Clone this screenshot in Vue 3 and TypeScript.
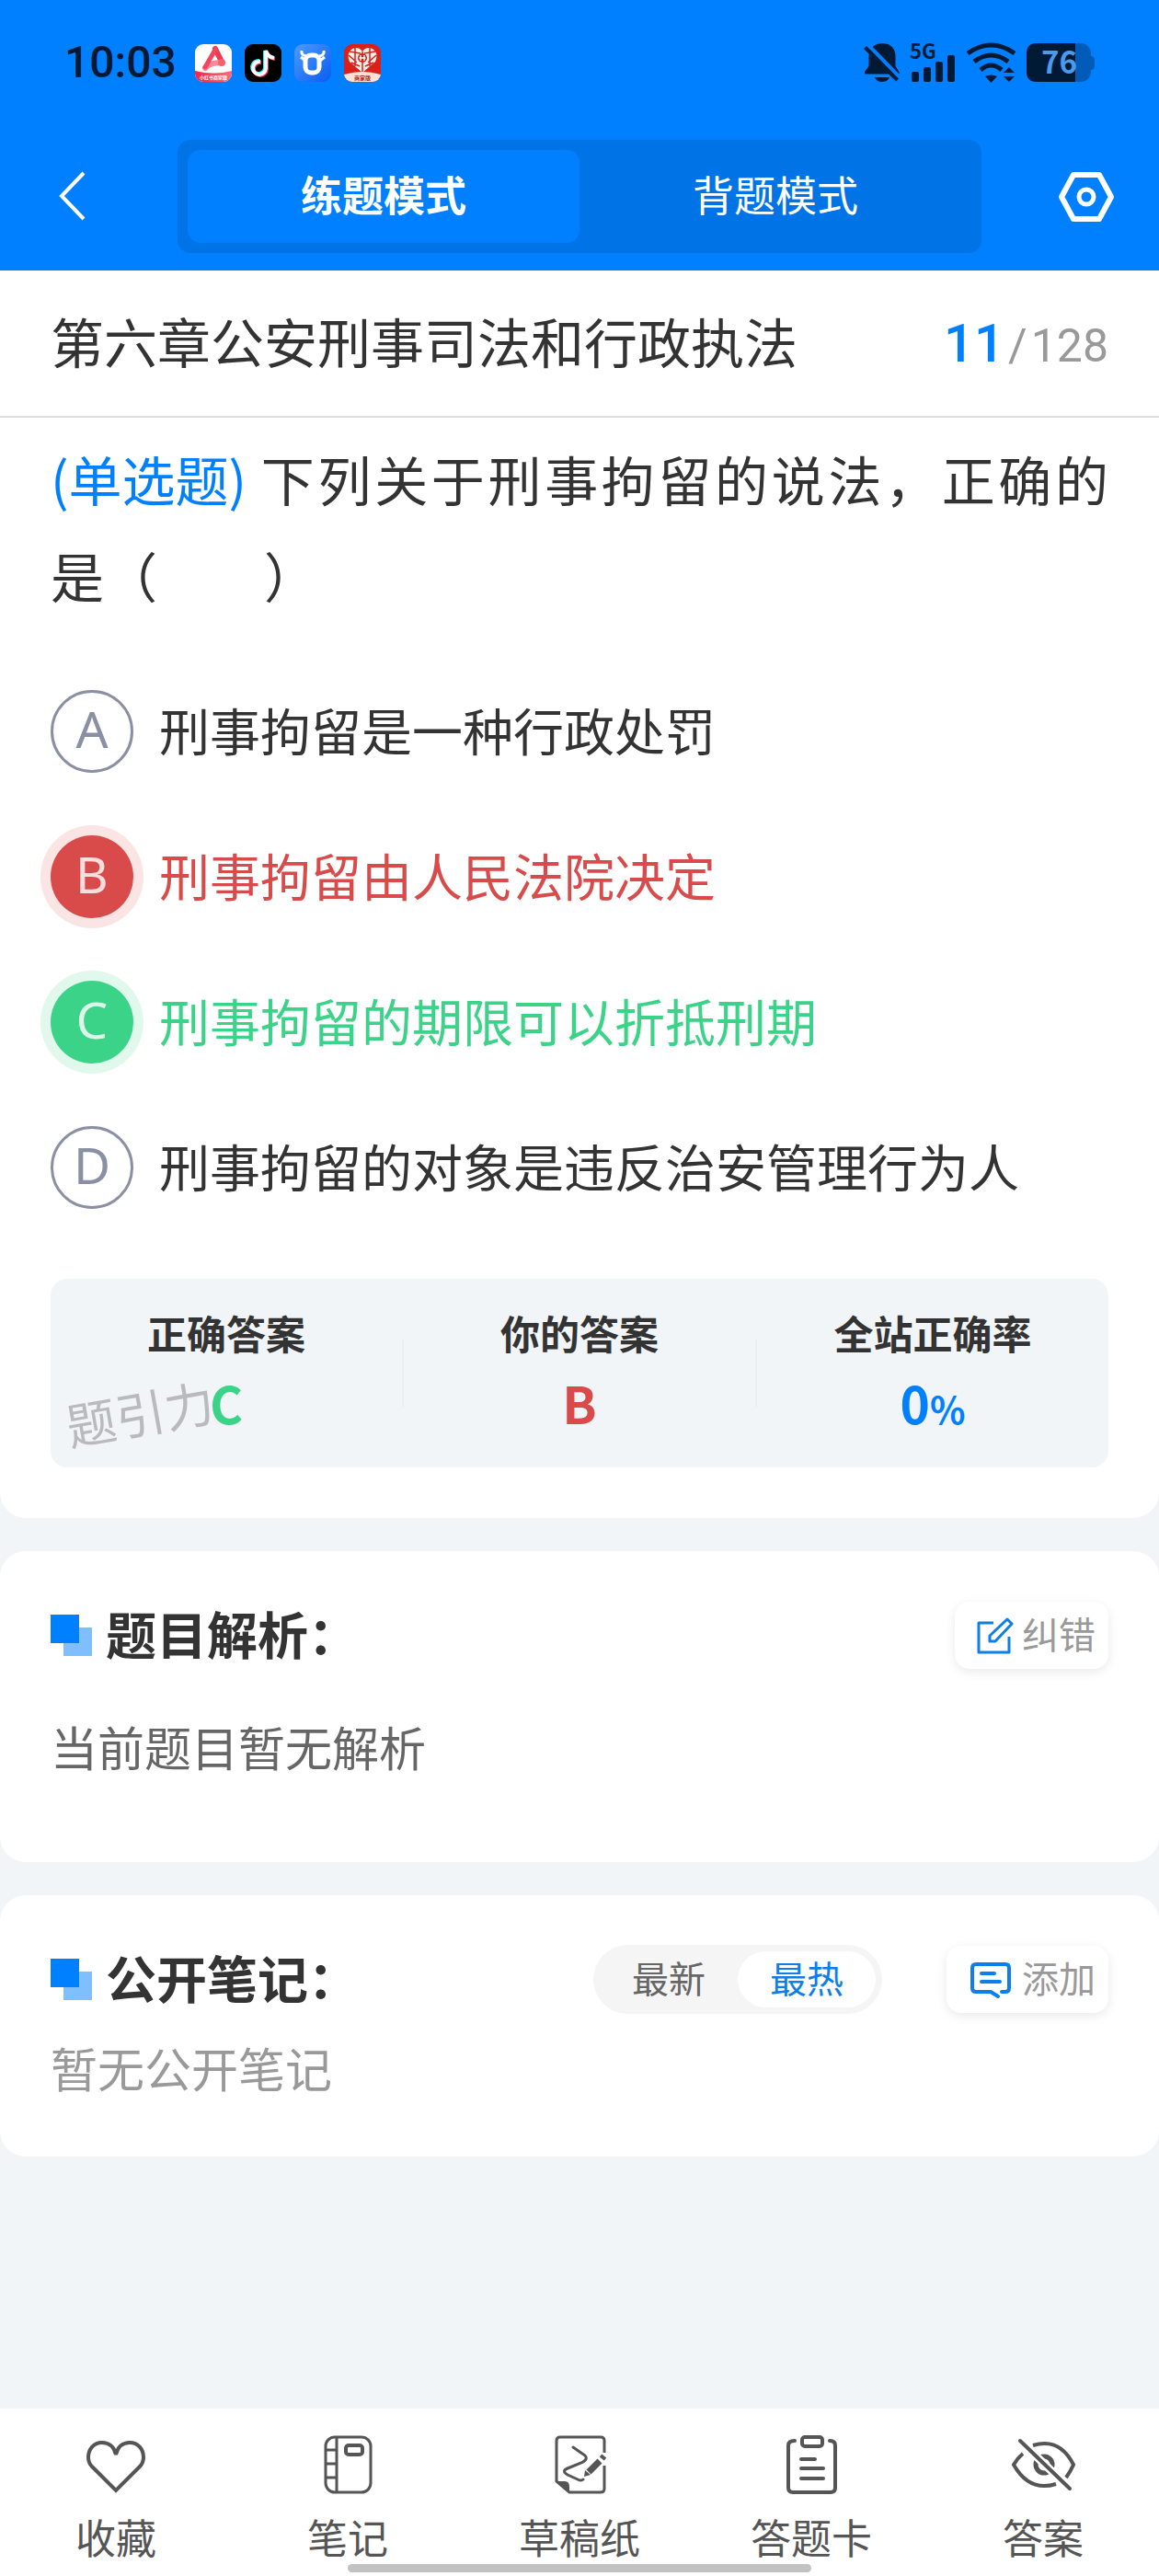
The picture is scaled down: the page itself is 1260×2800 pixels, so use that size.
<script setup lang="ts">
import { ref } from 'vue'

type OptionState = 'plain' | 'wrong' | 'right'

interface Option {
  key: string
  text: string
  state: OptionState
}

const modes = ['练题模式', '背题模式']
const mode = ref(0)

const options: Option[] = [
  { key: 'A', text: '刑事拘留是一种行政处罚', state: 'plain' },
  { key: 'B', text: '刑事拘留由人民法院决定', state: 'wrong' },
  { key: 'C', text: '刑事拘留的期限可以折抵刑期', state: 'right' },
  { key: 'D', text: '刑事拘留的对象是违反治安管理行为人', state: 'plain' },
]
const picked = ref('B')

const sorts = ['最新', '最热']
const sort = ref(1)
</script>

<template>
  <div class="page" lang="zh-CN">
    <header class="top">
      <div class="status">
        <div class="status-left">
          <span class="clock">10:03</span>
          <svg class="app" viewBox="0 0 40 41">
            <defs>
              <clipPath id="app-a"><rect width="40" height="41" rx="9" /></clipPath>
              <linearGradient id="band" x1="0" x2="1"><stop offset="0" stop-color="#f0244a" /><stop offset="1" stop-color="#ff6a7c" /></linearGradient>
            </defs>
            <g clip-path="url(#app-a)">
              <rect width="40" height="41" fill="#fff" />
              <path d="M0 29Q20 34 40 29V41H0Z" fill="url(#band)" />
              <path d="M22 5L28 17" fill="none" stroke="#f03a54" stroke-width="6" stroke-linecap="round" />
              <path d="M11 26Q16 20 29 20" fill="none" stroke="#ff8a96" stroke-width="6" stroke-linecap="round" />
              <path d="M11 25L22 6" stroke="#f4455d" stroke-width="5" stroke-linecap="round" />
              <circle cx="29" cy="20" r="4" fill="#f8606f" />
              <text x="20" y="38" font-size="5" font-weight="700" text-anchor="middle" fill="#fff">小红书商家版</text>
            </g>
          </svg>
          <svg class="app" viewBox="0 0 40 41">
            <rect width="40" height="41" rx="9" fill="#000" />
            <g fill="none" stroke-width="4">
              <path d="M16 18A7 7 0 1 0 22 26V7Q24 14 31 15" stroke="#25f4ee" />
              <path d="M18 20A7 7 0 1 0 24 27V8Q26 15 33 16" stroke="#fe2c55" />
              <path d="M17 19A7 7 0 1 0 23 26V7Q25 14 32 15" stroke="#fff" />
            </g>
          </svg>
          <svg class="app" viewBox="0 0 40 41">
            <defs><linearGradient id="bull" x2="1" y2="1"><stop stop-color="#4d9bff" /><stop offset="1" stop-color="#0a5cf0" /></linearGradient></defs>
            <rect width="40" height="41" rx="9" fill="url(#bull)" />
            <path d="M8 7Q7 12 13 13M32 7Q33 12 27 13M7 14L12 18M33 14L28 18" fill="none" stroke="#fff" stroke-width="3" />
            <rect x="12" y="12" width="15" height="19" rx="6" fill="none" stroke="#fff" stroke-width="5" />
          </svg>
          <svg class="app" viewBox="0 0 40 41">
            <defs><clipPath id="app-d"><rect width="40" height="41" rx="9" /></clipPath></defs>
            <g clip-path="url(#app-d)">
              <rect width="40" height="41" fill="#d9201a" />
              <path d="M0 33Q20 27 40 33V41H0Z" fill="#ffe3d6" />
              <path d="M20 31L6 19Q2 10 9 5Q16 2 20 8Q24 2 31 5Q38 10 34 19Z" fill="#fff0e8" />
              <path d="M12 3V24M28 3V24M5 12L14 20M35 12L26 20M6 8L18 10M34 8L22 10M20 8V30M8 20L17 24M32 20L23 24" stroke="#d9201a" stroke-width="1.500" />
              <circle cx="20" cy="15" r="5" fill="#d9201a" />
              <path d="M16.500 15H23.500M18 12V18M22 12V18" stroke="#fff" stroke-width="1.500" />
              <text x="20" y="39" font-size="6" font-weight="700" text-anchor="middle" fill="#a8281c">商家版</text>
            </g>
          </svg>
        </div>
        <div class="status-right">
          <svg width="40" height="43" viewBox="0 0 40 43">
            <path d="M1 33V31L5.500 25V14Q7 0 21 0Q34 1 34.500 14V25L38.500 31V33.500H1Z" fill="#001a36" />
            <path d="M12 37H28Q26 42 20 42Q14 42 12 37Z" fill="#001a36" />
            <path d="M3 0L41 39" stroke="#0080ff" stroke-width="4" />
            <path d="M1.500 4.500L36.500 40" stroke="#001a36" stroke-width="4" />
          </svg>
          <svg width="52" height="43" viewBox="0 0 52 43" fill="#001a36">
            <text x="0" y="17" font-size="22" font-weight="700">5G</text>
            <rect x="2" y="31" width="8" height="11" rx="2" />
            <rect x="15" y="26" width="8" height="16" rx="2" />
            <rect x="28" y="20" width="8" height="22" rx="2" />
            <rect x="41" y="13" width="8" height="29" rx="2" />
          </svg>
          <svg width="54" height="43" viewBox="0 0 54 43" fill="none" stroke="#001a36" stroke-width="5">
            <path d="M1 11Q26.500-7 52 11M8 20Q26.500 6 45 20M15 29Q26.500 19 38 29" />
            <path d="M20 36Q26.500 33 33 36L26.500 43ZM46 26L52 32H40ZM46 42L40 36H52Z" fill="#001a36" stroke="none" />
          </svg>
          <svg width="76" height="43" viewBox="0 0 76 43">
            <rect x="1" width="70" height="42" rx="11" fill="#005cb8" />
            <path d="M12 0H54V42H12Q1 42 1 31V11Q1 0 12 0Z" fill="#001a36" />
            <path d="M71 14Q75 14 75 18V25Q75 29 71 29Z" fill="#005cb8" />
            <text x="17" y="33" font-size="33" font-weight="700" fill="#4a9bee">76</text>
          </svg>
        </div>
      </div>
      <nav class="nav">
        <button class="back" type="button" aria-label="返回">
          <svg width="30" height="54" viewBox="0 0 30 54" fill="none" stroke="#fff" stroke-width="4"><path d="M28 1L4 26L28 51" /></svg>
        </button>
        <div class="modes">
          <button v-for="(m, i) in modes" :key="m" type="button" :class="['mode', { on: mode === i }]" @click="mode = i">{{ m }}</button>
        </div>
        <button class="gear" type="button" aria-label="设置">
          <svg width="62" height="54" viewBox="0 0 62 54" fill="none" stroke="#fff" stroke-width="6" stroke-linejoin="round">
            <path d="M17 3H45L58 27L45 51H17L4 27Z" /><circle cx="31" cy="27" r="8" stroke-width="5" />
          </svg>
        </button>
      </nav>
    </header>

    <main>
      <section class="card first">
        <div class="chapter">
          <h1>第六章公安刑事司法和行政执法</h1>
          <p class="count"><b>11</b><i>/</i>128</p>
        </div>
        <div class="body">
          <p class="question"><span class="kind">(单选题)</span>下列关于刑事拘留的说法，正确的是（　　）</p>
          <div class="options">
            <label v-for="o in options" :key="o.key" :class="['option', o.state]">
              <span class="mark">
                <input v-model="picked" type="radio" name="answer" :value="o.key" />
                <span class="letter">{{ o.key }}</span>
              </span>
              <span class="text">{{ o.text }}</span>
            </label>
          </div>
          <div class="result">
            <div class="cell">
              <h3>正确答案</h3>
              <p class="right">C</p>
              <span class="watermark">题引力</span>
            </div>
            <div class="rule"></div>
            <div class="cell">
              <h3>你的答案</h3>
              <p class="wrong">B</p>
            </div>
            <div class="rule"></div>
            <div class="cell">
              <h3>全站正确率</h3>
              <p class="rate">0<small>%</small></p>
            </div>
          </div>
        </div>
      </section>

      <section class="card analysis">
        <div class="head">
          <svg class="flag" width="46" height="46" viewBox="0 0 46 46"><rect x="14" y="14" width="31" height="31" fill="#80bfff" /><rect width="31" height="31" fill="#0080ff" /></svg>
          <h2>题目解析：</h2>
          <button class="act" type="button">
            <svg width="40" height="40" viewBox="0 0 40 40" fill="none" stroke="#0f7fe8" stroke-width="3" stroke-linejoin="round">
              <path d="M18 6H2V38H35V21" /><path d="M33 2L38 7L20 26H14V20Z" />
            </svg>
            <span>纠错</span>
          </button>
        </div>
        <p class="note dark">当前题目暂无解析</p>
      </section>

      <section class="card notes">
        <div class="head">
          <svg class="flag" width="46" height="46" viewBox="0 0 46 46"><rect x="14" y="14" width="31" height="31" fill="#80bfff" /><rect width="31" height="31" fill="#0080ff" /></svg>
          <h2>公开笔记：</h2>
          <div class="sorts">
            <button v-for="(s, i) in sorts" :key="s" type="button" :class="{ on: sort === i }" @click="sort = i">{{ s }}</button>
          </div>
          <button class="act" type="button">
            <svg width="49" height="40" viewBox="-2 0 49 40" fill="none" stroke="#0f7fe8" stroke-width="4" stroke-linecap="round" stroke-linejoin="round">
              <path d="M30 38L22 33H6Q2 33 2 29V7Q2 3 6 3H38Q42 3 42 7V29Q42 33 38 33H34M12 13H26M12 22H32" />
            </svg>
            <span>添加</span>
          </button>
        </div>
        <p class="note">暂无公开笔记</p>
      </section>
    </main>

    <footer class="tabs">
      <button type="button">
        <svg viewBox="0 0 72 64">
          <path d="M36 21C34 12 28 8 21 8C12 8 6 15 6 24C6 28 7 31 10 34L36 60L62 34C65 31 66 28 66 24C66 15 60 8 51 8C44 8 38 12 36 21Z" stroke-width="4" />
        </svg>
        收藏
      </button>
      <button type="button">
        <svg viewBox="0 0 72 64" stroke-width="3">
          <rect x="12" y="2" width="49" height="60" rx="10" /><path d="M24 2V62M12 16H24M12 31H24M12 46H24" /><rect x="34" y="11" width="18" height="10" rx="3" stroke-width="4" />
        </svg>
        笔记
      </button>
      <button type="button">
        <svg viewBox="0 0 72 64" stroke-width="3">
          <path d="M63 19V6Q63 2 59 2H15Q11 2 11 6V50L25 62H59Q63 62 63 58V33" />
          <path d="M10 50H20Q25 50 25 56V63Z" fill="#555" stroke="none" />
          <path d="M29 13L39 20Q48 25 38 30L23 36Q16 39 23 43L34 48Q38 50 40 48" stroke-linecap="round" />
          <path d="M58 28L46 40" stroke-width="7" /><path d="M59 22L64 26" stroke-width="4" /><path d="M42 38L48 43L41 45Z" fill="#555" stroke="none" />
        </svg>
        草稿纸
      </button>
      <button type="button">
        <svg viewBox="0 0 72 64" stroke-width="4" stroke-linecap="round">
          <path d="M18 6Q11 6 11 11V57Q11 62 16 62H57Q62 62 62 57V11Q62 6 56 6M25 26H40M25 36H49M25 47H49" /><rect x="26" y="2" width="22" height="10" rx="3" />
        </svg>
        答题卡
      </button>
      <button type="button">
        <svg viewBox="0 0 72 64" stroke-width="4">
          <path d="M25 11Q54 2 69 32Q66 39 61 46M14 20Q8 25 4 32Q21 62 50 53" />
          <circle cx="37" cy="32" r="9" stroke-width="5" /><path d="M11 6L65 58" stroke="#fff" stroke-width="9" /><path d="M11 6L65 58" stroke-linecap="round" />
        </svg>
        答案
      </button>
      <span class="home"></span>
    </footer>
  </div>
</template>

<style>
body {
  background: #f1f5f8;
}
</style>

<style scoped>
* {
  box-sizing: border-box;
}
h1, h2, h3, p {
  margin: 0;
  font-weight: 400;
}
button {
  border: 0;
  padding: 0;
  background: none;
  color: inherit;
  font: inherit;
}
svg {
  display: block;
  flex: none;
  overflow: visible;
}
.page {
  display: flex;
  flex-direction: column;
  min-height: 100vh;
  background: #f1f5f8;
  color: #333;
  font-family: "Noto Sans CJK SC", sans-serif;
}
.top {
  background: #0080ff;
  color: #fff;
}
.status {
  display: flex;
  justify-content: space-between;
  align-items: center;
  height: 136px;
  padding: 0 69px 0 70px;
}
.status-left {
  display: flex;
  align-items: center;
  gap: 14px;
}
.clock {
  width: 128px;
  color: #001a36;
  font-family: Roboto, sans-serif;
  font-size: 48px;
  font-weight: 500;
  line-height: 60px;
}
.app {
  width: 40px;
  height: 41px;
}
.status-right {
  display: flex;
  gap: 10px;
}
.nav {
  display: grid;
  grid-template-columns: 193px 1fr 193px;
  align-items: center;
  padding: 16px 0 19px;
}
.back {
  justify-self: start;
  margin-left: 63px;
}
.gear {
  justify-self: end;
  margin-right: 48px;
}
.modes {
  display: flex;
  height: 123px;
  padding: 11px;
  border-radius: 14px;
  background: #0073e6;
}
.mode {
  flex: 1;
  padding-bottom: 6px;
  border-radius: 14px;
  font-size: 45px;
}
.mode.on {
  background: #0080ff;
  font-weight: 700;
}
.card {
  margin-bottom: 36px;
  border-radius: 28px;
  background: #fff;
}
.card.first {
  border-radius: 0 0 28px 28px;
}
.chapter {
  display: flex;
  justify-content: space-between;
  align-items: center;
  height: 160px;
  padding: 0 55px;
  border-bottom: 2px solid #ddd;
}
.chapter h1 {
  padding-bottom: 6px;
  font-size: 58px;
}
.count {
  display: flex;
  align-items: baseline;
  color: #999;
  font-family: Roboto, sans-serif;
  font-size: 50px;
}
.count b {
  color: #0080ff;
  font-size: 58px;
  font-weight: 500;
}
.count i {
  margin: 0 4px;
  font-style: normal;
}
.body {
  padding: 14px 55px 55px;
}
.question {
  margin-bottom: 38px;
  font-size: 58px;
  line-height: 105px;
  text-align: justify;
}
.kind {
  display: inline-block;
  margin-right: 12px;
  color: #0080ff;
}
.option {
  display: flex;
  align-items: center;
  gap: 28px;
  height: 158px;
  font-size: 55px;
}
.text,
.letter {
  padding-bottom: 7px;
}
.mark {
  display: grid;
  place-items: center;
  width: 90px;
  height: 90px;
  color: #8a8fa3;
}
.mark > * {
  grid-area: 1 / 1;
}
.mark input {
  appearance: none;
  width: 90px;
  height: 90px;
  margin: 0;
  border: 3px solid #8a8fa3;
  border-radius: 50%;
}
.letter {
  font-family: "Noto Sans", sans-serif;
}
.wrong {
  color: #d94a4a;
}
.right {
  color: #3ad388;
}
.option.wrong .mark,
.option.right .mark {
  color: rgba(255, 255, 255, 0.82);
}
.option.wrong input {
  border: 0;
  background: #d94a4a;
  box-shadow: 0 0 0 11px #fae4e4;
}
.option.right input {
  border: 0;
  background: #3ad388;
  box-shadow: 0 0 0 11px #e1f8ec;
}
.result {
  display: flex;
  align-items: center;
  margin-top: 42px;
  border-radius: 18px;
  background: #f1f5f8;
  text-align: center;
}
.cell {
  position: relative;
  flex: 1;
  padding: 28px 0 36px;
}
.cell h3 {
  font-size: 43px;
  font-weight: 700;
  line-height: 60px;
}
.cell p {
  position: relative;
  z-index: 1;
  margin-top: 11px;
  font-size: 55px;
  font-weight: 700;
  line-height: 70px;
}
.cell small {
  font-size: 40px;
  line-height: 40px;
}
.rate {
  color: #0080ff;
}
.rule {
  width: 2px;
  height: 73px;
  background: #ebeef1;
}
.watermark {
  position: absolute;
  left: 16px;
  bottom: 20px;
  color: #b8babd;
  font-size: 54px;
  line-height: 80px;
  transform: rotate(-10deg);
}
.analysis,
.notes {
  padding: 55px 55px 89px;
}
.notes {
  padding-bottom: 60px;
}
.head {
  display: flex;
  align-items: center;
  height: 73px;
}
.head h2 {
  flex: 1;
  margin-left: 14px;
  padding-bottom: 8px;
  font-size: 55px;
  font-weight: 700;
}
.act {
  display: flex;
  align-items: center;
  gap: 9px;
  height: 73px;
  padding: 0 14px 0 24px;
  border-radius: 16px;
  color: #999;
  font-size: 40px;
  box-shadow: 0 3px 12px rgba(0, 0, 0, 0.09);
}
.act span {
  padding-bottom: 6px;
}
.sorts {
  display: flex;
  height: 75px;
  margin-right: 70px;
  padding: 7px;
  border-radius: 38px;
  background: #f5f5f5;
}
.sorts button {
  width: 150px;
  padding-bottom: 6px;
  border-radius: 31px;
  color: #666;
  font-size: 40px;
  line-height: 54px;
}
.sorts .on {
  background: #fff;
  color: #0f7fe8;
}
.note {
  margin-top: 24px;
  padding-bottom: 2px;
  color: #999;
  font-size: 51px;
  line-height: 70px;
}
.note.dark {
  margin-top: 49px;
  color: #666;
}
.tabs {
  position: sticky;
  bottom: 0;
  display: flex;
  height: 182px;
  margin-top: auto;
  padding-top: 29px;
  background: #fff;
  color: #555;
}
.tabs button {
  display: flex;
  flex: 1;
  flex-direction: column;
  align-items: center;
  gap: 16px;
  font-size: 44px;
  line-height: 60px;
}
.tabs svg {
  width: 72px;
  height: 64px;
  fill: none;
  stroke: #555;
}
.home {
  position: absolute;
  bottom: 4px;
  left: 30%;
  width: 40%;
  height: 9px;
  border-radius: 5px;
  background: #c2c2c2;
}
</style>
